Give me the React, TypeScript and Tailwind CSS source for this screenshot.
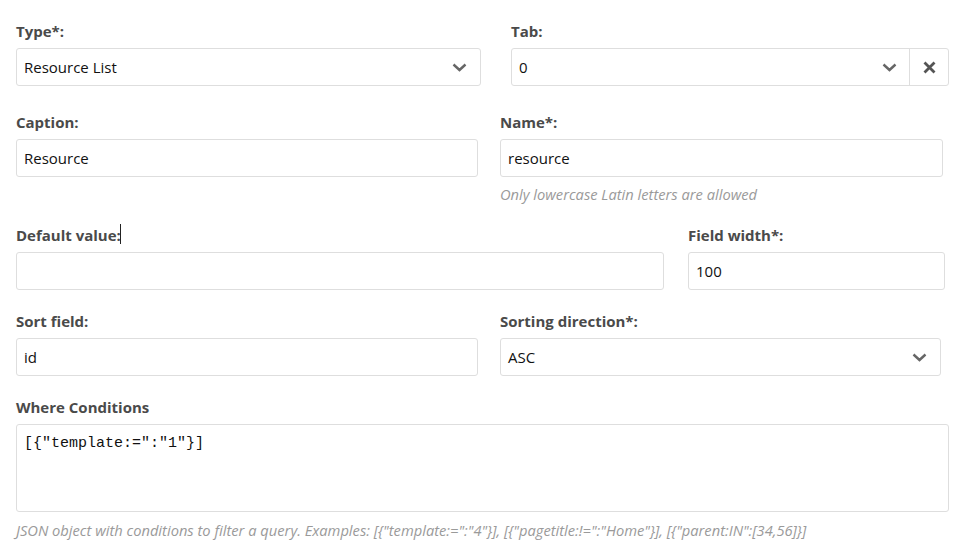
import React from 'react';

const font = { fontFamily: '"Open Sans", "Noto Sans", sans-serif' };

function Chevron() {
  return (
    <svg width="15" height="9" viewBox="0 0 15 9" className="shrink-0">
      <path d="M1.5 1.5 L7.5 7 L13.5 1.5" fill="none" stroke="#666" strokeWidth="2.4" />
    </svg>
  );
}

function Cross() {
  return (
    <svg width="13" height="13" viewBox="0 0 13 13">
      <path d="M1.5 1.5 L11.5 11.5 M11.5 1.5 L1.5 11.5" fill="none" stroke="#555" strokeWidth="2.8" />
    </svg>
  );
}

function Label({ text, cursor }: { text: string; cursor?: boolean }) {
  return (
    <div className="relative h-[20px] leading-[17px] pb-[3px] mb-[5px] text-[15px] font-bold text-[#4a4a4a]">
      {text}
      {cursor && <span className="absolute left-[104px] top-[-3px] w-px h-[20px] bg-[#222]" />}
    </div>
  );
}

function Box({ value, select, className }: { value: string; select?: boolean; className?: string }) {
  return (
    <div className={`h-[38px] flex items-center justify-between border border-[#dedede] rounded-[3px] bg-white pl-[7px] pr-[13px] ${className ?? ''}`}>
      <span className="text-[15px] text-[#111]">{value}</span>
      {select && <Chevron />}
    </div>
  );
}

function Help({ text, className }: { text: string; className?: string }) {
  return <div className={`h-[20px] leading-[20px] text-[14.7px] italic text-[#9a9a9a] ${className ?? ''}`}>{text}</div>;
}

export default function App() {
  return (
    <div className="w-[974px] h-[553px] bg-white pl-[16px] pt-[23px]" style={font}>
      <div className="flex">
        <div className="w-[465px]">
          <Label text="Type*:" />
          <Box value="Resource List" select />
        </div>
        <div className="w-[438px] ml-[30px]">
          <Label text="Tab:" />
          <div className="h-[38px] flex items-center border border-[#dedede] rounded-[3px]">
            <div className="flex-1 flex items-center justify-between pl-[7px] pr-[12px]">
              <span className="text-[15px] text-[#111]">0</span>
              <Chevron />
            </div>
            <div className="w-[39px] h-full border-l border-[#dedede] flex items-center justify-center">
              <Cross />
            </div>
          </div>
        </div>
      </div>

      <div className="flex mt-[28px]">
        <div className="w-[462px]">
          <Label text="Caption:" />
          <Box value="Resource" />
        </div>
        <div className="w-[443px] ml-[22px]">
          <Label text="Name*:" />
          <Box value="resource" />
          <Help text="Only lowercase Latin letters are allowed" className="mt-[7px]" />
        </div>
      </div>

      <div className="flex mt-[23px]">
        <div className="w-[648px]">
          <Label text="Default value:" cursor />
          <Box value="" />
        </div>
        <div className="w-[257px] ml-[24px]">
          <Label text="Field width*:" />
          <Box value="100" />
        </div>
      </div>

      <div className="flex mt-[23px]">
        <div className="w-[462px]">
          <Label text="Sort field:" />
          <Box value="id" />
        </div>
        <div className="w-[441px] ml-[22px]">
          <Label text="Sorting direction*:" />
          <Box value="ASC" select />
        </div>
      </div>

      <div className="mt-[23px] w-[933px]">
        <Label text="Where Conditions" />
        <div className="h-[88px] border border-[#dedede] rounded-[3px] px-[7px] pt-[4px]">
          <span className="text-[15px] leading-[22px] text-[#111]" style={{ fontFamily: '"Liberation Mono", "DejaVu Sans Mono", monospace' }}>
            [{'{'}"template:=":"1"{'}'}]
          </span>
        </div>
        <Help
          text={'JSON object with conditions to filter a query. Examples: [{"template:=":"4"}], [{"pagetitle:!=":"Home"}], [{"parent:IN":[34,56]}]'}
          className="mt-[8px]"
        />
      </div>
    </div>
  );
}
